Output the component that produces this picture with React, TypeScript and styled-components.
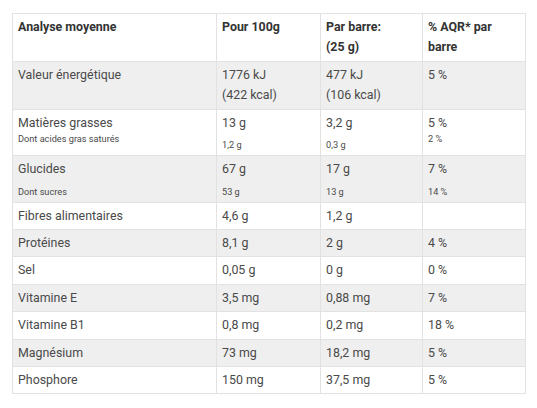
import React from "react";
import styled, { createGlobalStyle } from "styled-components";

const Global = createGlobalStyle`
  html, body { margin: 0; padding: 0; background: #ffffff; }
  body { font-family: Roboto, "Liberation Sans", Arial, sans-serif; }
`;

const Page = styled.div`
  padding: 13px 12px 0 12px;
`;

const Table = styled.table`
  border-collapse: collapse;
  table-layout: fixed;
  width: 513px;
  font-size: 12.4px;
  color: #4a4a4a;
`;

const Row = styled.tr<{ $shade?: boolean }>`
  background: ${(p) => (p.$shade ? "#efefef" : "#ffffff")};
`;

const Cell = styled.td`
  border: 1px solid #e2e2e2;
  padding: 3px 5px 3px 5px;
  vertical-align: top;
  line-height: 20.4px;
`;

const HeadCell = styled(Cell).attrs({ as: "th" })`
  font-weight: 700;
  text-align: left;
  color: #333333;
`;

const Line = styled.div`
  white-space: nowrap;
`;

const Small = styled.div<{ $gap: number; $lh: number }>`
  font-size: 9.2px;
  white-space: nowrap;
  margin-top: ${(p) => p.$gap}px;
  line-height: ${(p) => p.$lh}px;
`;

type SmallSpec = { text: string; gap: number; lh: number };
type CellSpec = { lines: string[]; small?: SmallSpec };

const c = (lines: string[] | string, small?: SmallSpec): CellSpec => ({
  lines: Array.isArray(lines) ? lines : [lines],
  small,
});

const rows: CellSpec[][] = [
  [c(["Valeur énergétique"]), c(["1776 kJ", "(422 kcal)"]), c(["477 kJ", "(106 kcal)"]), c("5 %")],
  [
    c("Matières grasses", { text: "Dont acides gras saturés", gap: 0, lh: 12 }),
    c("13 g", { text: "1,2 g", gap: 5, lh: 13.6 }),
    c("3,2 g", { text: "0,3 g", gap: 5, lh: 13.6 }),
    c("5 %", { text: "2 %", gap: 0, lh: 12 }),
  ],
  [
    c("Glucides", { text: "Dont sucres", gap: 6, lh: 13.6 }),
    c("67 g", { text: "53 g", gap: 6, lh: 13.6 }),
    c("17 g", { text: "13 g", gap: 6, lh: 13.6 }),
    c("7 %", { text: "14 %", gap: 6, lh: 13.6 }),
  ],
  [c("Fibres alimentaires"), c("4,6 g"), c("1,2 g"), c("")],
  [c("Protéines"), c("8,1 g"), c("2 g"), c("4 %")],
  [c("Sel"), c("0,05 g"), c("0 g"), c("0 %")],
  [c("Vitamine E"), c("3,5 mg"), c("0,88 mg"), c("7 %")],
  [c("Vitamine B1"), c("0,8 mg"), c("0,2 mg"), c("18 %")],
  [c("Magnésium"), c("73 mg"), c("18,2 mg"), c("5 %")],
  [c("Phosphore"), c("150 mg"), c("37,5 mg"), c("5 %")],
];

const headers: string[][] = [
  ["Analyse moyenne"],
  ["Pour 100g"],
  ["Par barre:", "(25 g)"],
  ["% AQR* par", "barre"],
];

export default function App() {
  return (
    <Page>
      <Global />
      <Table>
        <colgroup>
          <col style={{ width: 204 }} />
          <col style={{ width: 104 }} />
          <col style={{ width: 102 }} />
          <col style={{ width: 103 }} />
        </colgroup>
        <thead>
          <Row>
            {headers.map((h, i) => (
              <HeadCell key={i}>
                {h.map((l, j) => (
                  <Line key={j}>{l}</Line>
                ))}
              </HeadCell>
            ))}
          </Row>
        </thead>
        <tbody>
          {rows.map((r, i) => (
            <Row key={i} $shade={i % 2 === 0}>
              {r.map((cell, j) => (
                <Cell key={j}>
                  {cell.lines.map((l, k) => (
                    <Line key={k}>{l || "\u00a0"}</Line>
                  ))}
                  {cell.small && (
                    <Small $gap={cell.small.gap} $lh={cell.small.lh}>
                      {cell.small.text}
                    </Small>
                  )}
                </Cell>
              ))}
            </Row>
          ))}
        </tbody>
      </Table>
    </Page>
  );
}
